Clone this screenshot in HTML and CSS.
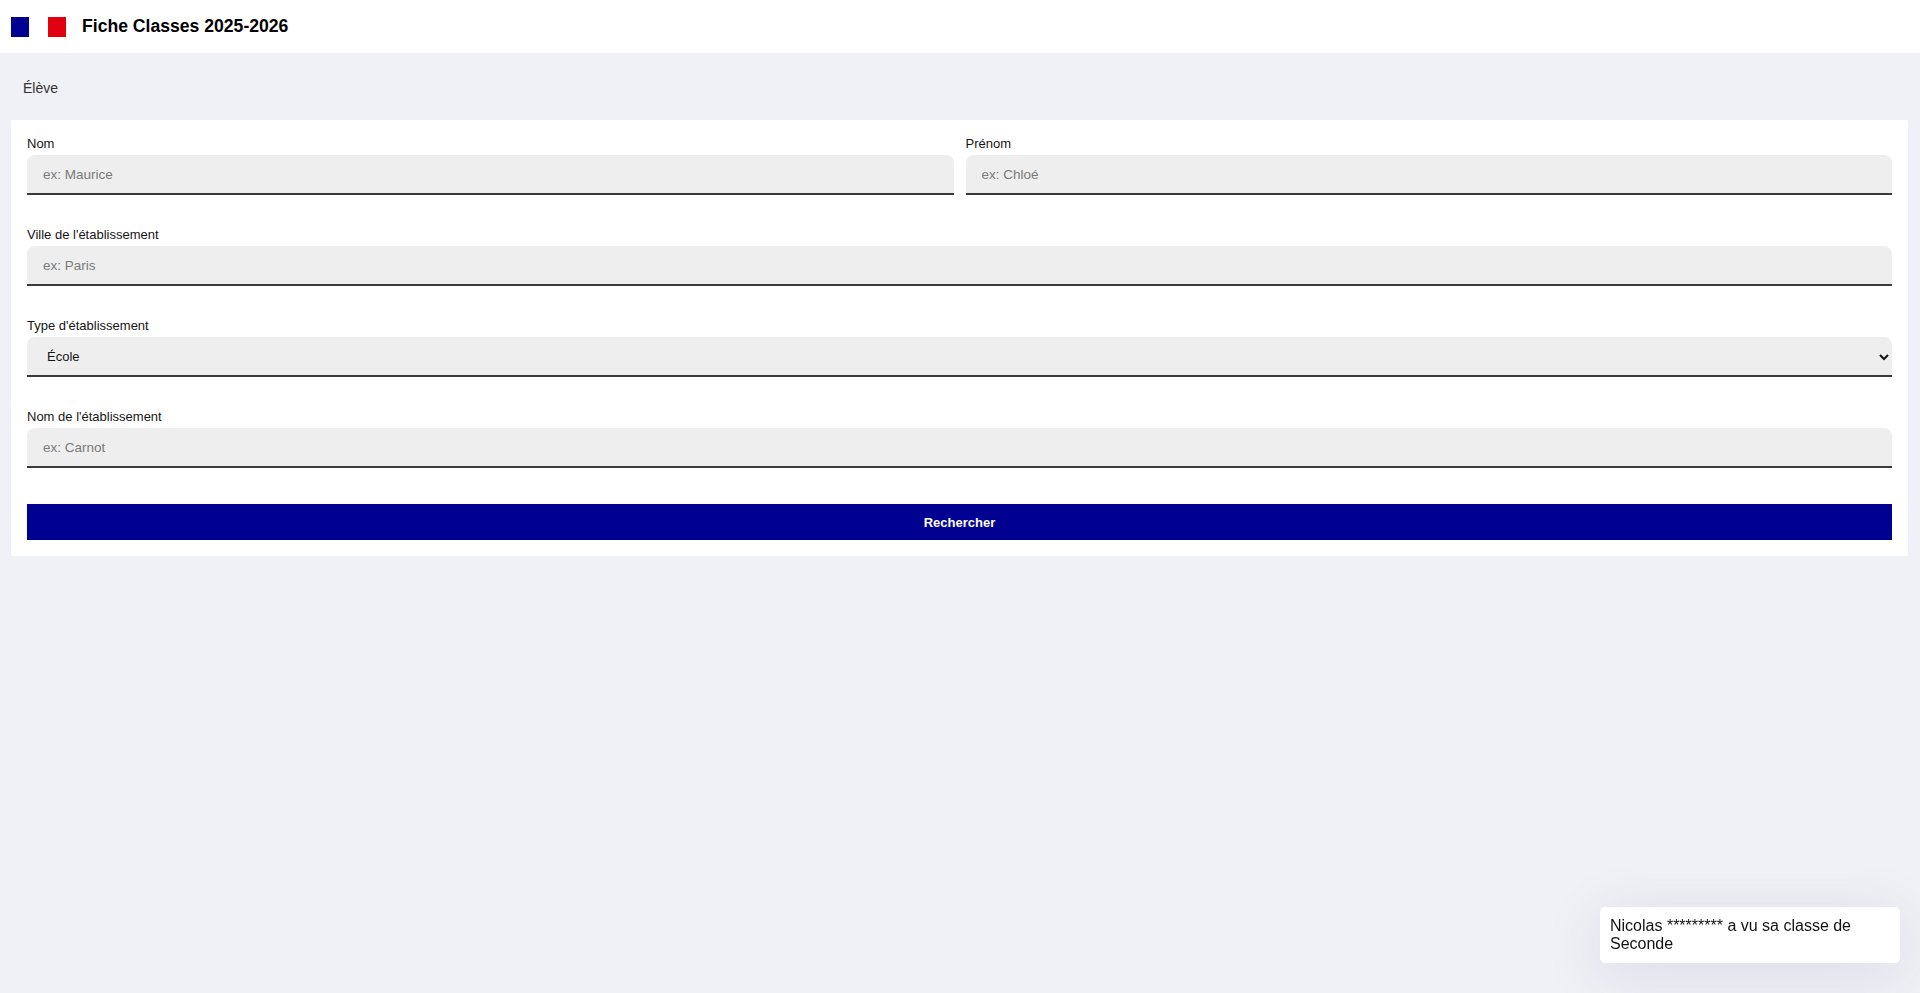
FILE: index.html
```html
<!DOCTYPE html>
<html lang="fr">
<head>
    <meta charset="UTF-8">
    <meta name="viewport" content="width=device-width, initial-scale=1.0">
    <title>Fiche Classes 2025-2026</title>
    <link rel="stylesheet" href="styles.css">
</head>
<body>
    <header class="topbar">
        <span class="flag flag-blue"></span>
        <span class="flag flag-red"></span>
        <h1 class="title">Fiche Classes 2025-2026</h1>
    </header>

    <main class="page">
        <div class="section-title">Élève</div>

        <form class="card" onsubmit="return false">
            <div class="row two-cols">
                <div class="field">
                    <label for="nom">Nom</label>
                    <input type="text" id="nom" placeholder="ex: Maurice">
                </div>
                <div class="field">
                    <label for="prenom">Prénom</label>
                    <input type="text" id="prenom" placeholder="ex: Chloé">
                </div>
            </div>

            <div class="row field">
                <label for="ville">Ville de l'établissement</label>
                <input type="text" id="ville" placeholder="ex: Paris">
            </div>

            <div class="row field">
                <label for="type">Type d'établissement</label>
                <select id="type">
                    <option>École</option>
                    <option>Collège</option>
                    <option>Lycée</option>
                </select>
            </div>

            <div class="row field">
                <label for="etab">Nom de l'établissement</label>
                <input type="text" id="etab" placeholder="ex: Carnot">
            </div>

            <button type="submit" class="search-btn">Rechercher</button>
        </form>
    </main>

    <!-- notification en bas à droite -->
    <div class="toast">Nicolas ********* a vu sa classe de Seconde</div>
</body>
</html>
```

FILE: styles.css
```css
body {
    font-family: 'Liberation Sans', Arial, sans-serif;
    background-color: #f0f1f6;
    color: #111;
    margin: 0;
    padding: 0;
    min-height: 100vh;
}

.topbar {
    background-color: #ffffff;
    height: 53px;
    display: flex;
    align-items: center;
    padding-left: 11px;
    box-sizing: border-box;
}

.flag {
    display: inline-block;
    width: 18px;
    height: 20px;
}

.flag-blue {
    background-color: #000091;
    margin-right: 19px;
}

.flag-red {
    background-color: #e1000f;
    margin-right: 16px;
}

.title {
    font-size: 17.6px;
    font-weight: bold;
    margin: 0;
    color: #000;
}

.page {
    padding: 0 12px 0 11px;
}

.section-title {
    height: 67px;
    display: flex;
    align-items: center;
    padding: 2px 0 0 12px;
    box-sizing: border-box;
    font-size: 14px;
    color: #333;
}

.card {
    background-color: #ffffff;
    border-radius: 2px;
    padding: 16px;
    display: flex;
    flex-direction: column;
}

.row {
    margin-bottom: 32px;
}

.two-cols {
    display: grid;
    grid-template-columns: 1fr 1fr;
    gap: 12px;
}

.field {
    display: flex;
    flex-direction: column;
}

.field label {
    font-size: 13px;
    line-height: 15px;
    margin-bottom: 4px;
    color: #161616;
}

.field input,
.field select {
    font-family: 'Liberation Sans', Arial, sans-serif;
    font-size: 13.5px;
    height: 40px;
    box-sizing: border-box;
    background-color: #eeeeee;
    border: none;
    border-bottom: 2px solid #3a3a3a;
    border-radius: 8px 8px 0 0;
    padding: 0 16px;
    color: #161616;
    outline: none;
}

.field input::placeholder {
    color: #7a7a7a;
}

.field select {
    font-size: 13px;
    padding: 0 12px 0 16px;
}

.search-btn {
    margin-top: 4px;
    height: 36px;
    background-color: #000091;
    color: #ffffff;
    font-family: 'Liberation Sans', Arial, sans-serif;
    font-size: 13px;
    font-weight: bold;
    border: none;
    cursor: pointer;
}

.search-btn:hover {
    background-color: #1212ff;
}

.toast {
    position: fixed;
    right: 20px;
    bottom: 30px;
    width: 300px;
    box-sizing: border-box;
    padding: 10px;
    background-color: #ffffff;
    border-radius: 5px;
    font-size: 16px;
    color: #111;
    box-shadow: 0 10px 60px rgba(60, 60, 120, 0.12);
}
```
